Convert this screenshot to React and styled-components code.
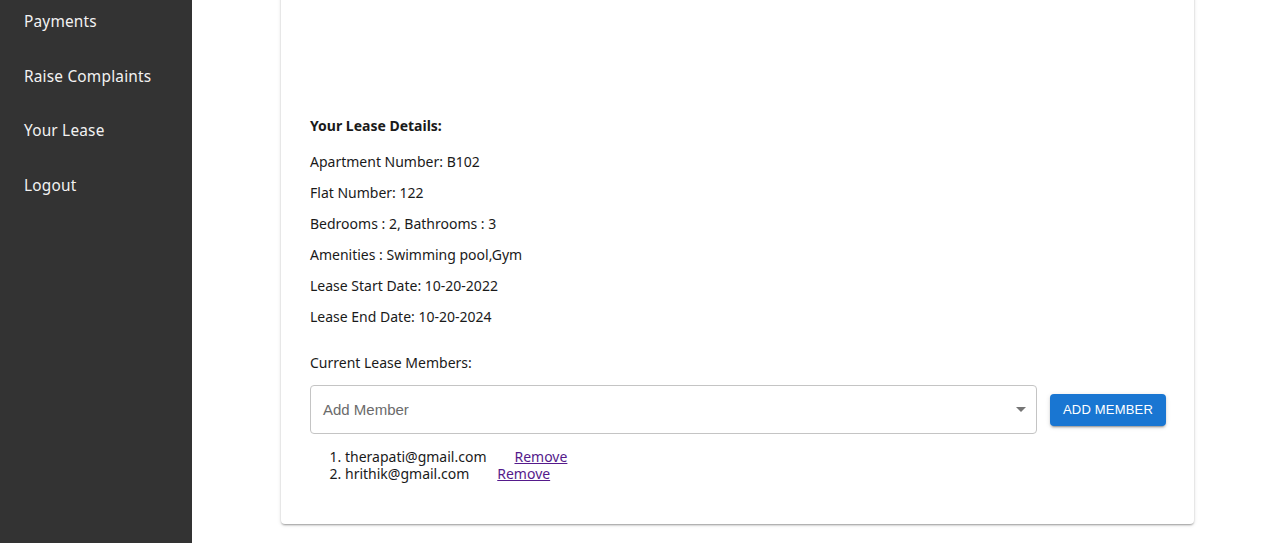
import React from 'react';
import styled, { createGlobalStyle } from 'styled-components';

const GlobalStyle = createGlobalStyle`
  html, body {
    margin: 0;
    padding: 0;
    height: 543px;
    overflow: hidden;
    background: #fff;
  }
  body {
    font-family: "Noto Sans", "Open Sans", sans-serif;
  }
`;

const Page = styled.div`
  display: flex;
  height: 543px;
  overflow: hidden;
`;

const Sidebar = styled.nav`
  width: 192px;
  flex-shrink: 0;
  background: #333333;
  display: flex;
  flex-direction: column;
  gap: 32px;
  padding: 11px 0 0 24px;
  box-sizing: border-box;
`;

const NavItem = styled.a`
  color: #f2f2f2;
  font-size: 15.4px;
  line-height: 22.5px;
  text-decoration: none;
  letter-spacing: 0.2px;
`;

const Main = styled.main`
  flex: 1;
  display: flex;
  justify-content: center;
  padding-left: 3px;
  overflow: hidden;
`;

const Card = styled.section`
  width: 913px;
  height: 534px;
  margin-top: -10px;
  background: #fff;
  border-radius: 4px;
  box-shadow: 0 2px 2px -1px rgba(0,0,0,0.22), 0 1px 2px 0 rgba(0,0,0,0.14), 0 1px 4px 0 rgba(0,0,0,0.12);
  padding: 126px 28px 0 29px;
  box-sizing: border-box;
  color: #1a1a1a;
  font-size: 14px;
`;

const Heading = styled.h3`
  margin: 0 0 16px;
  font-size: 14px;
  font-weight: 700;
  line-height: 20px;
`;

const Detail = styled.p`
  margin: 0 0 11px;
  line-height: 20px;
`;

const MembersLabel = styled.p`
  margin: 26px 0 12px;
  line-height: 20px;
`;

const AddRow = styled.div`
  display: flex;
  align-items: center;
  gap: 13px;
`;

const Select = styled.div`
  flex: 1;
  height: 49px;
  border: 1px solid #c4c4c4;
  border-radius: 4px;
  box-sizing: border-box;
  display: flex;
  align-items: center;
  justify-content: space-between;
  padding: 0 10px 0 12px;
  font-family: "Liberation Sans", Arial, sans-serif;
  font-size: 15px;
  color: #6b6b6b;
`;

const Button = styled.button`
  height: 32px;
  width: 116px;
  border: none;
  border-radius: 4px;
  background: #1976d2;
  color: #fff;
  font-family: "Liberation Sans", Arial, sans-serif;
  font-size: 13px;
  letter-spacing: 0.2px;
  text-transform: uppercase;
  box-shadow: 0 3px 1px -2px rgba(0,0,0,0.2), 0 2px 2px 0 rgba(0,0,0,0.14), 0 1px 5px 0 rgba(0,0,0,0.12);
  cursor: pointer;
`;

const List = styled.ol`
  margin: 14px 0 0;
  padding-left: 35px;
  line-height: 17px;
`;

const RemoveLink = styled.a`
  margin-left: 28px;
  color: #551a8b;
  text-decoration: underline;
`;

const members = ['therapati@gmail.com', 'hrithik@gmail.com'];

export default function App() {
  return (
    <>
      <GlobalStyle />
      <Page>
        <Sidebar>
          <NavItem href="#">Payments</NavItem>
          <NavItem href="#">Raise Complaints</NavItem>
          <NavItem href="#">Your Lease</NavItem>
          <NavItem href="#">Logout</NavItem>
        </Sidebar>
        <Main>
          <Card>
            <Heading>Your Lease Details:</Heading>
            <Detail>Apartment Number: B102</Detail>
            <Detail>Flat Number: 122</Detail>
            <Detail>Bedrooms : 2, Bathrooms : 3</Detail>
            <Detail>Amenities : Swimming pool,Gym</Detail>
            <Detail>Lease Start Date: 10-20-2022</Detail>
            <Detail>Lease End Date: 10-20-2024</Detail>
            <MembersLabel>Current Lease Members:</MembersLabel>
            <AddRow>
              <Select>
                Add Member
                <svg width="10" height="5" viewBox="0 0 10 5">
                  <path d="M0 0 L5 5 L10 0 Z" fill="#757575" />
                </svg>
              </Select>
              <Button>Add Member</Button>
            </AddRow>
            <List>
              {members.map((m) => (
                <li key={m}>
                  {m}
                  <RemoveLink href="#">Remove</RemoveLink>
                </li>
              ))}
            </List>
          </Card>
        </Main>
      </Page>
    </>
  );
}
